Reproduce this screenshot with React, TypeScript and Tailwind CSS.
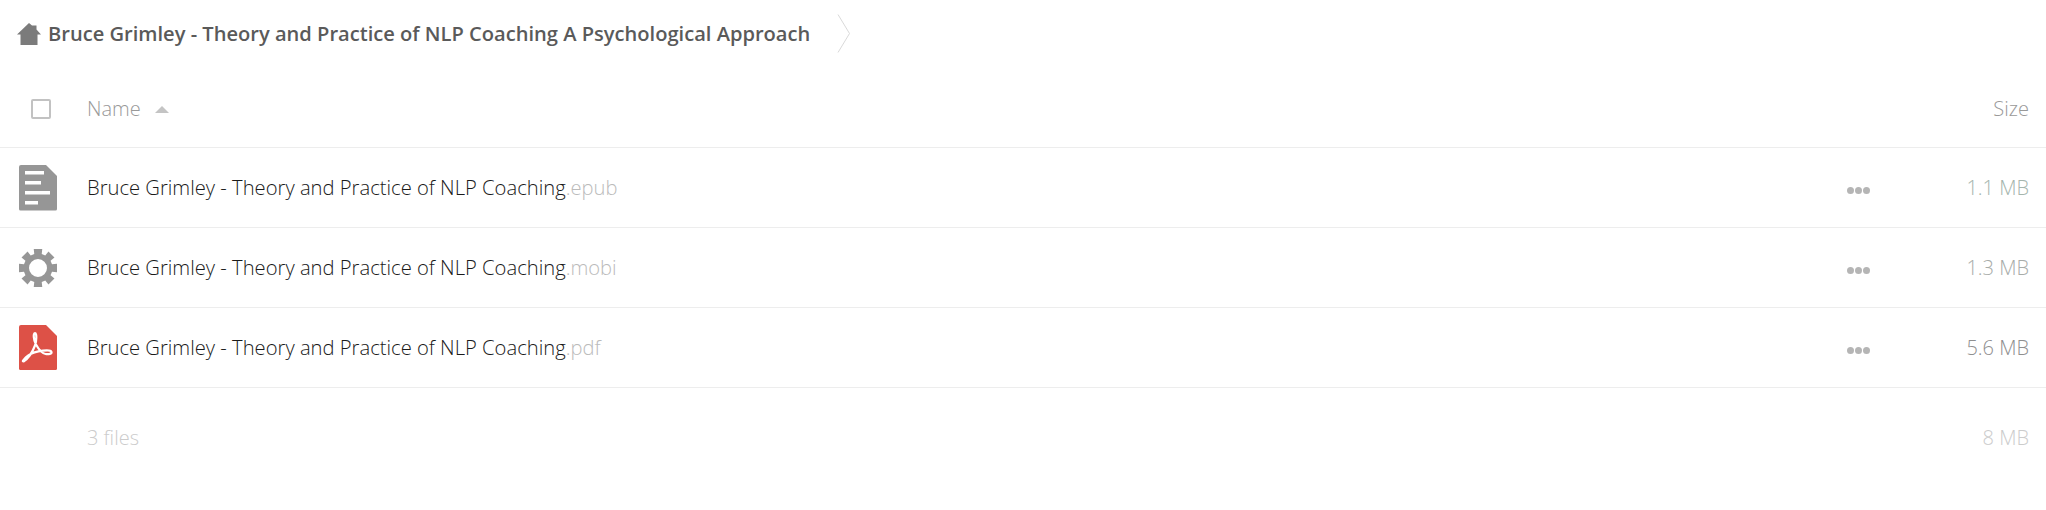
import React from 'react';

const files = [
  { ext: '.epub', size: '1.1 MB', sizeClass: 'text-[#a5b5ad]', icon: 'doc' },
  { ext: '.mobi', size: '1.3 MB', sizeClass: 'text-[#a8aca9]', icon: 'gear' },
  { ext: '.pdf', size: '5.6 MB', sizeClass: 'text-[#8f8f8f]', icon: 'pdf' },
];

// eight square teeth round a ring
function gearPath() {
  const cx = 19;
  const cy = 19;
  let d = '';
  for (let i = 0; i < 8; i++) {
    const a = (i * Math.PI) / 4 - Math.PI / 2;
    const pt = (r: number, off: number) => {
      const x = cx + r * Math.cos(a + off);
      const y = cy + r * Math.sin(a + off);
      return `${x.toFixed(2)} ${y.toFixed(2)}`;
    };
    d += `${i === 0 ? 'M' : 'L'}${pt(14.5, -0.26)}L${pt(19.5, -0.22)}L${pt(19.5, 0.22)}L${pt(14.5, 0.26)}`;
  }
  return d + 'Z M19 10a9 9 0 1 0 0 18a9 9 0 0 0 0-18Z';
}

function DocIcon() {
  return (
    <svg width="38" height="46" viewBox="0 0 38 46">
      <path d="M2 0H27L38 11V44a1.500 1.500 0 0 1-1.500 1.500H1.500A1.500 1.500 0 0 1 0 44V2a2 2 0 0 1 2-2Z" fill="#969696" />
      <path d="M6 6h19v3.500H6zM6 16h16v3.500H6zM6 26h25v3.500H6zM6 36h13v3.500H6z" fill="#fff" />
    </svg>
  );
}

function GearIcon() {
  return (
    <svg width="38" height="38" viewBox="0 0 38 38">
      <path fillRule="evenodd" fill="#969696" d={gearPath()} />
    </svg>
  );
}

function PdfIcon() {
  return (
    <svg width="38" height="45" viewBox="0 0 38 45">
      <path d="M2 0H27L38 11V43.500a1.500 1.500 0 0 1-1.500 1.500H1.500A1.500 1.500 0 0 1 0 43.500V2a2 2 0 0 1 2-2Z" fill="#dd5147" />
      <path
        d="M4.500 36.500c4-2.500 9-9.500 11.500-16 1.500-4 2-12.500 0-12.500-2 0-1.500 7 1 11.500 2.800 5 6.500 9 9.500 9.500 3 .5 6.500-.3 6-2-.5-1.600-4.500-1.800-8.500-1.300-6 .7-11.500 2.500-15 5-2.500 2-6.700 6.300-4.500 5.300Z"
        fill="none"
        stroke="#fff"
        strokeWidth="2.200"
        strokeLinejoin="round"
      />
    </svg>
  );
}

function FileIcon({ name }: { name: string }) {
  if (name === 'doc') return <DocIcon />;
  if (name === 'gear') return <GearIcon />;
  return <PdfIcon />;
}

export default function App() {
  return (
    <div className="h-[510px] w-[2046px] overflow-hidden bg-white font-['Open_Sans',sans-serif]">
      {/* breadcrumb */}
      <div className="flex h-[71px] items-start pt-[14px]">
        <div className="flex h-[38px] w-[811px] items-center pl-[17px]">
          <svg className="mt-[2px]" width="24" height="22" viewBox="0 0 24 22">
            <path d="M12 0L15 2.500H19.500V6.500L24 11.500H20.500V22H3.500V11.500H0Z" fill="#7b7b7b" />
          </svg>
          <span className="ml-[7px] mt-[2px] whitespace-nowrap text-[20.1px] font-semibold text-[#5a5a5a]">
            Bruce Grimley - Theory and Practice of NLP Coaching A Psychological Approach
          </span>
        </div>
        <svg className="ml-[26px]" width="14" height="39" viewBox="0 0 14 39">
          <path d="M1 0.500L12.500 19.500L1 38.500" fill="none" stroke="#d9d9d9" strokeWidth="1" />
        </svg>
      </div>

      {/* table head */}
      <div className="flex h-[77px] items-center border-b border-[#ededed] pr-[17px]">
        <div className="ml-[31px] h-[20px] w-[20px] rounded-[2px] border-2 border-[#c2c2c2]" />
        <span className="ml-[36px] text-[20px] font-light text-[#999]">Name</span>
        <span className="ml-[14px] h-0 w-0 border-x-[7px] border-b-[7px] border-x-transparent border-b-[#c4c4c4]" />
        <span className="ml-auto text-[20px] font-light text-[#999]">Size</span>
      </div>

      {/* files */}
      {files.map((file) => (
        <div key={file.ext} className="flex h-[80px] items-center border-b border-[#ededed] pr-[17px]">
          <div className="flex w-[87px] justify-start pl-[19px]">
            <FileIcon name={file.icon} />
          </div>
          <span className="text-[20.2px] font-light text-[#1a1a1a]">
            Bruce Grimley - Theory and Practice of NLP Coaching
            <span className="text-[#bbb]">{file.ext}</span>
          </span>
          <div className="ml-auto mt-[6px] flex gap-[1px]">
            <span className="h-[7px] w-[7px] rounded-full bg-[#b5b5b5]" />
            <span className="h-[7px] w-[7px] rounded-full bg-[#b5b5b5]" />
            <span className="h-[7px] w-[7px] rounded-full bg-[#b5b5b5]" />
          </div>
          <span className={`w-[159px] text-right text-[20px] font-light ${file.sizeClass}`}>{file.size}</span>
        </div>
      ))}

      {/* summary */}
      <div className="flex h-[99px] items-center pl-[87px] pr-[17px] text-[20px] font-light text-[#ccc]">
        <span>3 files</span>
        <span className="ml-auto">8 MB</span>
      </div>
    </div>
  );
}
